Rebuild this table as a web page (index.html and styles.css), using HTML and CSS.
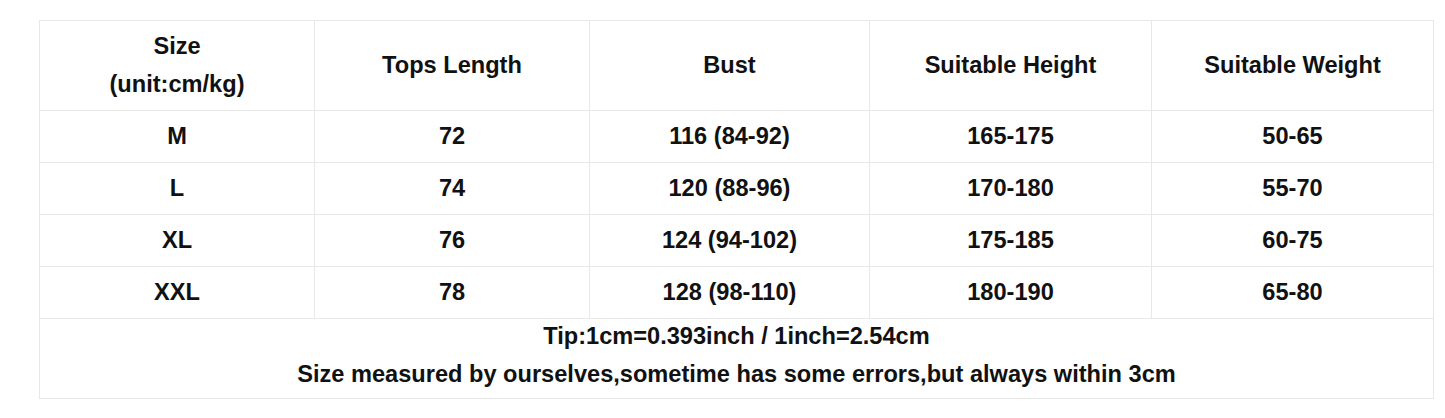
FILE: index.html
```html
<!DOCTYPE html>
<html>
<head>
<meta charset="utf-8">
<link rel="stylesheet" href="styles.css">
</head>
<body>
<div class="wrap">
<table class="size-table">
  <colgroup>
    <col class="c1"><col class="c2"><col class="c3"><col class="c4"><col class="c5">
  </colgroup>
  <tr class="head">
    <td>Size<br>(unit:cm/kg)</td>
    <td>Tops Length</td>
    <td>Bust</td>
    <td>Suitable Height</td>
    <td>Suitable Weight</td>
  </tr>
  <tr class="row"><td>M</td><td>72</td><td>116 (84-92)</td><td>165-175</td><td>50-65</td></tr>
  <tr class="row"><td>L</td><td>74</td><td>120 (88-96)</td><td>170-180</td><td>55-70</td></tr>
  <tr class="row"><td>XL</td><td>76</td><td>124 (94-102)</td><td>175-185</td><td>60-75</td></tr>
  <tr class="row"><td>XXL</td><td>78</td><td>128 (98-110)</td><td>180-190</td><td>65-80</td></tr>
  <tr class="foot">
    <td colspan="5">
      <div class="notes">
        <p class="note">Tip:1cm=0.393inch / 1inch=2.54cm</p>
        <p class="note">Size measured by ourselves,sometime has some errors,but always within 3cm</p>
      </div>
    </td>
  </tr>
</table>
</div>
</body>
</html>
```

FILE: styles.css
```css
html, body {
  margin: 0;
  padding: 0;
  background: #ffffff;
}
.wrap {
  padding: 20px 0 0 39px;
}
.size-table {
  border-collapse: collapse;
  table-layout: fixed;
  width: 1394px;
  font-family: "Liberation Sans", Arial, sans-serif;
  font-weight: bold;
  font-size: 23.6px;
  color: #111111;
}
.c1 { width: 275px; }
.c2 { width: 275px; }
.c3 { width: 280px; }
.c4 { width: 282px; }
.c5 { width: 282px; }
.size-table td {
  border: 1px solid #e8e8e8;
  text-align: center;
  vertical-align: middle;
  padding: 0 0 2px 0;
  line-height: 38px;
  white-space: nowrap;
}
.head td {
  height: 87px;
}
.row td {
  height: 49px;
}
.foot td {
  height: 77px;
  padding: 2px 0 0 0;
  vertical-align: top;
}
.notes {
  display: flex;
  flex-direction: column;
  gap: 8px;
}
.note {
  margin: 0;
  line-height: 30px;
}
```
